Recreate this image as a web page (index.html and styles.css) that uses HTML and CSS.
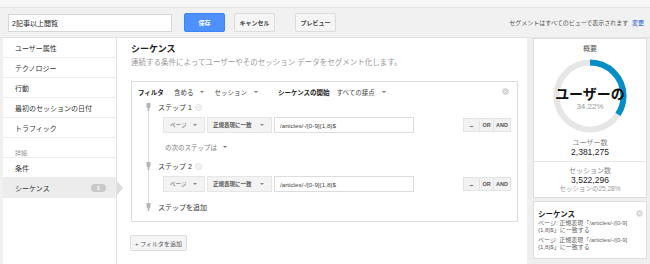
FILE: index.html
```html
<!DOCTYPE html>
<html lang="ja">
<head>
<meta charset="utf-8">
<title>セグメント</title>
<link rel="stylesheet" href="styles.css">
</head>
<body>
<div class="topstrip"></div>
<div class="toolbar">
  <div class="name">2記事以上閲覧</div>
  <div class="btn primary">保存</div>
  <div class="btn cancel">キャンセル</div>
  <div class="btn preview">プレビュー</div>
  <div class="note">セグメントはすべてのビューで表示されます <span class="link">変更</span></div>
</div>
<div class="layout">
  <nav class="sidebar">
    <div class="item">ユーザー属性</div>
    <div class="item">テクノロジー</div>
    <div class="item">行動</div>
    <div class="item">最初のセッションの日付</div>
    <div class="item">トラフィック</div>
    <div class="section">詳細</div>
    <div class="item">条件</div>
    <div class="item selected">シーケンス<span class="badge">1</span></div>
  </nav>
  <main class="main">
    <h1 class="title">シーケンス</h1>
    <p class="subtitle">連続する条件によってユーザーやそのセッション データをセグメント化します。</p>
    <div class="filter">
      <div class="filter-head">
        <span class="strong">フィルタ</span>
        <span class="opt">含める</span><span class="caret"></span>
        <span class="opt">セッション</span><span class="caret"></span>
        <span class="strong gap">シーケンスの開始</span>
        <span class="opt">すべての接点</span><span class="caret"></span>
        <svg class="close head-close" viewBox="0 0 8 8"><circle cx="4" cy="4" r="3.6" fill="#d0d0d0"/><path d="M2.6 2.6 5.4 5.4M5.4 2.6 2.6 5.4" stroke="#fff" stroke-width="1"/></svg>
      </div>
      <div class="steps">
        <div class="step-label">
          <svg class="pin" viewBox="0 0 5 8"><path d="M0.5 0h4v4.2l-1.2 1V8H1.7V5.2L0.5 4.2z" fill="#b5b5b5"/></svg>
          <span>ステップ 1</span>
          <svg class="close" viewBox="0 0 8 8"><circle cx="4" cy="4" r="3.3" fill="none" stroke="#d0d0d0" stroke-width="0.9"/><path d="M2.8 2.8 5.2 5.2M5.2 2.8 2.8 5.2" stroke="#d0d0d0" stroke-width="0.9"/></svg>
        </div>
        <div class="cond">
          <div class="dd page">ページ<span class="caret"></span></div>
          <div class="dd match">正規表現に一致<span class="caret"></span></div>
          <div class="val">/articles/-/[0-9]{1,8}$</div>
          <div class="ops"><span class="op minus">–</span><span class="op">OR</span><span class="op">AND</span></div>
        </div>
        <div class="next">の次のステップは<span class="caret"></span></div>
        <div class="step-label">
          <svg class="pin" viewBox="0 0 5 8"><path d="M0.5 0h4v4.2l-1.2 1V8H1.7V5.2L0.5 4.2z" fill="#b5b5b5"/></svg>
          <span>ステップ 2</span>
          <svg class="close" viewBox="0 0 8 8"><circle cx="4" cy="4" r="3.3" fill="none" stroke="#d0d0d0" stroke-width="0.9"/><path d="M2.8 2.8 5.2 5.2M5.2 2.8 2.8 5.2" stroke="#d0d0d0" stroke-width="0.9"/></svg>
        </div>
        <div class="cond">
          <div class="dd page">ページ<span class="caret"></span></div>
          <div class="dd match">正規表現に一致<span class="caret"></span></div>
          <div class="val">/articles/-/[0-9]{1,8}$</div>
          <div class="ops"><span class="op minus">–</span><span class="op">OR</span><span class="op">AND</span></div>
        </div>
        <div class="step-label add">
          <svg class="pin" viewBox="0 0 5 8"><path d="M0.5 0h4v4.2l-1.2 1V8H1.7V5.2L0.5 4.2z" fill="#b5b5b5"/></svg>
          <span>ステップを追加</span>
        </div>
      </div>
    </div>
    <div class="add-filter">+ フィルタを追加</div>
  </main>
  <aside class="summary">
    <div class="card overview">
      <div class="ov-title">概要</div>
      <div class="donut">
        <svg viewBox="0 0 74 74" width="74" height="74">
          <circle cx="37" cy="37" r="33.5" fill="none" stroke="#e6e6e6" stroke-width="6"/>
          <circle cx="37" cy="37" r="33.5" fill="none" stroke="#058dc7" stroke-width="6" stroke-dasharray="72.03 210.49" transform="rotate(-90 37 37)"/>
        </svg>
        <div class="donut-text">
          <div class="big">ユーザーの</div>
          <div class="pct">34.22%</div>
        </div>
      </div>
      <div class="stat">
        <div class="stat-label">ユーザー数</div>
        <div class="stat-num">2,381,275</div>
      </div>
      <div class="stat sep">
        <div class="stat-label">セッション数</div>
        <div class="stat-num">3,522,296</div>
        <div class="stat-sub">セッションの25.28%</div>
      </div>
    </div>
    <div class="card seq">
      <div class="seq-head">
        <span class="seq-title">シーケンス</span>
        <svg class="close" viewBox="0 0 8 8"><circle cx="4" cy="4" r="3.6" fill="#d6d6d6"/><path d="M2.6 2.6 5.4 5.4M5.4 2.6 2.6 5.4" stroke="#fff" stroke-width="1"/></svg>
      </div>
      <p class="seq-line">ページ: 正規表現「/articles/-/[0-9]<br>{1,8}$」に一致する</p>
      <p class="seq-line">ページ: 正規表現「/articles/-/[0-9]<br>{1,8}$」に一致する</p>
    </div>
  </aside>
</div>
</body>
</html>
```
FILE: styles.css
```css
* { box-sizing: border-box; }
html, body { margin: 0; padding: 0; }
body {
  width: 650px;
  height: 264px;
  overflow: hidden;
  background: #f1f1f1;
  font-family: "Liberation Sans", "Noto Sans CJK JP", sans-serif;
  color: #333;
}

.topstrip {
  height: 8px;
  background: #f6f6f6;
  border-bottom: 1px solid #e2e2e2;
}

.toolbar {
  display: flex;
  align-items: center;
  height: 29px;
  padding: 0 6px 0 8px;
  background: #f1f1f1;
}
.name {
  width: 164px;
  height: 18px;
  display: flex;
  align-items: center;
  padding-left: 3px;
  background: #fff;
  border: 1px solid #d6d6d6;
  font-size: 7px;
  color: #222;
}
.btn {
  width: 41px;
  height: 19px;
  display: flex;
  align-items: center;
  justify-content: center;
  background: #f5f5f5;
  border: 1px solid #dcdcdc;
  border-radius: 2px;
  font-size: 6px;
  font-weight: bold;
  color: #444;
}
.btn.primary {
  margin-left: 12px;
  background: #4d90fe;
  border-color: #3f84f0;
  color: #fff;
}
.btn.cancel { margin-left: 9px; }
.btn.preview { margin-left: 20px; }
.note {
  margin-left: auto;
  font-size: 6px;
  color: #555;
}
.note .link { color: #15c; margin-left: 2px; }

.layout {
  display: flex;
  height: 227px;
  border-top: 1px solid #e2e2e2;
}

.sidebar {
  position: relative;
  width: 114px;
  margin-left: 3px;
  background: #fff;
  border-right: 1px solid #e2e2e2;
}
.item {
  position: relative;
  height: 20px;
  display: flex;
  align-items: center;
  padding-left: 12px;
  border-bottom: 1px solid #ececec;
  font-size: 7px;
  color: #333;
}
.section {
  height: 20px;
  padding: 10px 0 0 12px;
  font-size: 6px;
  color: #999;
  border-bottom: 1px solid #ececec;
}
.item.selected {
  background: #ececec;
}
.item.selected::after {
  content: "";
  position: absolute;
  right: -7px;
  top: 3px;
  border-left: 6px solid #dcdcdc;
  border-top: 7px solid transparent;
  border-bottom: 7px solid transparent;
}
.badge {
  margin-left: auto;
  margin-right: 10px;
  width: 15px;
  height: 8px;
  border-radius: 4px;
  background: #c9c9c9;
  color: #fff;
  font-size: 6px;
  font-weight: bold;
  display: flex;
  align-items: center;
  justify-content: center;
}

.main {
  width: 410px;
  background: #fff;
  padding: 6px 9px 0 14px;
}
.title {
  margin: 0;
  font-size: 9px;
  line-height: 11px;
  font-weight: bold;
  color: #222;
}
.subtitle {
  margin: 3px 0 0;
  font-size: 7.5px;
  line-height: 10px;
  color: #999;
}
.filter {
  width: 387px;
  margin-top: 13px;
  border: 1px solid #dcdcdc;
  padding-bottom: 8px;
}
.filter-head {
  display: flex;
  align-items: center;
  height: 19px;
  padding: 0 8px 0 6px;
  font-size: 6.5px;
  color: #444;
}
.filter-head .strong { font-weight: bold; color: #222; }
.filter-head .opt { margin-left: 10px; }
.filter-head .gap { margin-left: 20px; }
.filter-head .gap + .opt { margin-left: 7px; }
.caret {
  display: inline-block;
  margin-left: 7px;
  width: 0;
  height: 0;
  border-left: 2px solid transparent;
  border-right: 2px solid transparent;
  border-top: 2.5px solid #777;
}
.close { width: 7px; height: 7px; display: block; }
.head-close { margin-left: auto; }

.steps {
  position: relative;
  padding-left: 14px;
}
.steps::before {
  content: "";
  position: absolute;
  left: 16px;
  top: 8px;
  bottom: 8px;
  width: 1px;
  background: #dedede;
}
.step-label {
  position: relative;
  display: flex;
  align-items: center;
  height: 12px;
  font-size: 7px;
  color: #333;
}
.pin { width: 5px; height: 8px; display: block; margin-right: 7px; }
.step-label .close { margin-left: 3px; }
.step-label.add { margin-top: 9px; }
.cond {
  display: flex;
  align-items: center;
  height: 16px;
  margin: 4px 6px 0 17px;
}
.dd {
  height: 16px;
  display: flex;
  align-items: center;
  padding-left: 6px;
  background: #f3f3f3;
  border: 1px solid #e6e6e6;
  font-size: 5.5px;
  color: #555;
}
.dd.page { width: 42px; }
.dd.match { width: 65px; margin-left: 2px; font-weight: bold; padding-left: 5px; }
.dd .caret { margin-left: auto; margin-right: 7px; border-top-color: #888; }
.val {
  width: 140px;
  height: 16px;
  margin-left: 2px;
  display: flex;
  align-items: center;
  padding-left: 5px;
  border: 1px solid #dcdcdc;
  font-size: 6.25px;
  color: #444;
}
.ops {
  margin-left: auto;
  display: flex;
  height: 14px;
  border: 1px solid #e3e3e3;
  background: #f2f2f2;
}
.op {
  display: flex;
  align-items: center;
  justify-content: center;
  width: 14px;
  font-size: 5.5px;
  font-weight: bold;
  color: #555;
  border-left: 1px solid #e3e3e3;
}
.op.minus { border-left: none; width: 15px; font-size: 7px; }
.op:last-child { width: 17px; }
.next {
  display: flex;
  align-items: center;
  height: 14px;
  margin: 7px 0 6px 19px;
  font-size: 6.5px;
  color: #777;
}
.next .caret { margin-left: 6px; }

.add-filter {
  display: inline-flex;
  align-items: center;
  height: 16px;
  margin-top: 13px;
  margin-left: -1px;
  padding: 0 4px;
  border: 1px solid #dcdcdc;
  background: #f5f5f5;
  border-radius: 2px;
  font-size: 6px;
  color: #555;
}

.summary {
  width: 123px;
  background: #efefef;
  padding: 0 3px 0 6px;
}
.card {
  background: #fff;
  border: 1px solid #dedede;
}
.overview {
  height: 160px;
  display: flex;
  flex-direction: column;
  align-items: center;
  padding-top: 5px;
}
.ov-title {
  font-size: 7px;
  line-height: 9px;
  color: #555;
}
.donut {
  position: relative;
  width: 74px;
  height: 74px;
  margin-top: 6px;
}
.donut svg { display: block; }
.donut-text {
  position: absolute;
  left: -20px;
  right: -20px;
  top: 27px;
  text-align: center;
}
.big {
  font-size: 14px;
  line-height: 16px;
  font-weight: bold;
  color: #111;
}
.pct {
  font-size: 8px;
  line-height: 9px;
  color: #999;
}
.stat {
  width: 100%;
  text-align: center;
  margin-top: 5px;
}
.stat.sep {
  margin-top: 4px;
  border-top: 1px solid #e6e6e6;
  padding-top: 4px;
}
.stat-label { font-size: 7px; line-height: 9px; color: #888; }
.stat-num { font-size: 8.5px; line-height: 10px; color: #222; }
.stat-sub { font-size: 6.5px; line-height: 8px; color: #999; }

.seq {
  margin-top: 3px;
  height: 58px;
  padding: 6px 3px 0 4px;
}
.seq-head {
  display: flex;
  align-items: center;
  justify-content: space-between;
  height: 10px;
}
.seq-title { font-size: 7.5px; font-weight: bold; color: #222; }
.seq-line {
  margin: 2px 0 0;
  font-size: 6px;
  line-height: 7px;
  color: #666;
}
.seq-line + .seq-line { margin-top: 3px; }
```
